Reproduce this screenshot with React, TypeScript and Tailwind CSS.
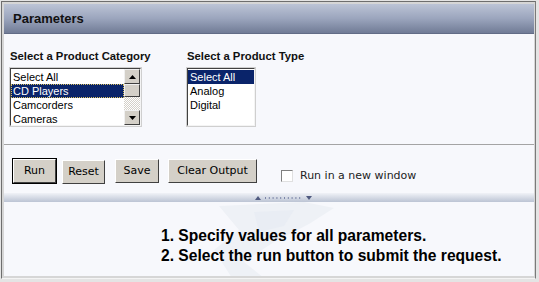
import type { ReactNode } from 'react';

const tahoma = { fontFamily: '"DejaVu Sans", Verdana, sans-serif' };

function ListBox({ items, selected, focused, width, scroll }: { items: string[]; selected: number; focused?: boolean; width: number; scroll?: boolean }) {
  return (
    <div className="border border-[#cfcfcf] bg-[#cfcfcf]" style={{ width }}>
      <div className="flex h-[58px] border border-t-[#404040] border-l-[#404040] border-r-[#f4f4f4] border-b-[#f4f4f4] bg-white">
        <div className="flex flex-1 flex-col pt-[1px]">
          {items.map((item, i) => (
            <div
              key={item}
              className={
                'h-[14px] pl-[1px] text-[11px] leading-[13px] ' +
                (i === selected
                  ? 'bg-[#0a246a] text-white ' + (focused ? 'border border-dotted border-[#d8c060]' : 'border border-transparent')
                  : 'border border-transparent text-black')
              }
            >
              {item}
            </div>
          ))}
        </div>
        {scroll && <ScrollBar />}
      </div>
    </div>
  );
}

function ArrowBtn({ children }: { children: ReactNode }) {
  return (
    <div className="flex h-[15px] w-[16px] items-center justify-center border border-t-[#f0f0f0] border-l-[#f0f0f0] border-r-[#404040] border-b-[#404040] bg-[#d4d0c8]">
      {children}
    </div>
  );
}

function ScrollBar() {
  return (
    <div className="flex w-[16px] flex-col">
      <ArrowBtn>
        <svg width="7" height="4" viewBox="0 0 7 4"><path d="M3.5 0 L7 4 L0 4 Z" fill="#000" /></svg>
      </ArrowBtn>
      <div className="h-[13px] w-[16px] border border-t-[#f0f0f0] border-l-[#f0f0f0] border-r-[#404040] border-b-[#404040] bg-[#d4d0c8]" />
      <div className="flex-1 bg-[repeating-conic-gradient(#ffffff_0%_25%,#d4d0c8_0%_50%)] bg-[length:2px_2px]" />
      <ArrowBtn>
        <svg width="7" height="4" viewBox="0 0 7 4"><path d="M0 0 L7 0 L3.5 4 Z" fill="#000" /></svg>
      </ArrowBtn>
    </div>
  );
}

function Btn({ label, width, primary }: { label: string; width: number; primary?: boolean }) {
  return (
    <div className={primary ? 'border border-black' : ''}>
      <div
        className="flex h-[24px] items-center justify-center border border-t-[#ffffff] border-l-[#ffffff] border-r-[#404040] border-b-[#404040] bg-[#d4d0c8] text-[11px] text-black"
        style={{ width: primary ? width - 2 : width, ...tahoma }}
      >
        {label}
      </div>
    </div>
  );
}

export default function App() {
  const arial = { fontFamily: '"Liberation Sans", Arial, sans-serif' };
  return (
    <div className="h-[282px] w-[539px] bg-[#e4e4e4] pt-[1px] pr-[3px] pb-[3px] pl-[1px]">
      <div className="flex h-full flex-col border border-t-[#6e6e6e] border-l-[#6e6e6e] border-r-[#7a7a7a] border-b-[#f4f4f4] bg-[#d6d6d6] p-[2px] pr-[1px]">
        <div className="flex flex-1 flex-col bg-[#f7f8fc]" style={arial}>
          <div className="flex h-[30px] items-center border-b border-[#626c86] bg-gradient-to-b from-[#bcc4d6] via-[#9ba5bd] to-[#717c96] pl-[9px] pt-[1px] text-[13px] font-bold text-[#111]">
            Parameters
          </div>

          <div className="flex pl-[5px] pt-[16px]">
            <div className="flex w-[177px] flex-col">
              <div className="mb-[4px] pl-[1px] text-[11.3px] leading-[13px] font-bold text-[#111]">Select a Product Category</div>
              <ListBox items={['Select All', 'CD Players', 'Camcorders', 'Cameras']} selected={1} focused width={133} scroll />
            </div>
            <div className="flex flex-col">
              <div className="mb-[4px] pl-[1px] text-[11.3px] leading-[13px] font-bold text-[#111]">Select a Product Type</div>
              <ListBox items={['Select All', 'Analog', 'Digital']} selected={0} width={70} />
            </div>
          </div>

          <div className="mt-[17px] h-[1px] bg-[#a4a4a4]" />

          <div className="flex items-end pl-[8px] pt-[13px]">
            <div className="flex items-end gap-[5px]">
              <Btn label="Run" width={45} primary />
              <Btn label="Reset" width={43} />
            </div>
            <div className="ml-[10px] mb-[1px] flex gap-[9px]">
              <Btn label="Save" width={44} />
              <Btn label="Clear Output" width={89} />
            </div>
            <div className="ml-[24px] flex items-center gap-[7px]" style={tahoma}>
              <div className="h-[12px] w-[12px] border border-t-[#808080] border-l-[#808080] border-r-[#e0e0e0] border-b-[#e0e0e0] bg-white" />
              <span className="text-[11px] text-[#222]">Run in a new window</span>
            </div>
          </div>

          <div className="mt-[9px] flex h-[9px] items-center justify-center bg-gradient-to-b from-[#f0f2f7] to-[#bcc4d4] pl-[30px]">
            <svg width="58" height="6" viewBox="0 0 58 6">
              <path d="M0 5 L3 1 L6 5 Z" fill="#505a80" />
              {Array.from({ length: 10 }).map((_, i) => (
                <rect key={i} x={10 + i * 3.8} y={2} width={1} height={2} fill="#7c86a8" />
              ))}
              <path d="M51 1 L57 1 L54 5 Z" fill="#505a80" />
            </svg>
          </div>

          <div className="relative flex-1 overflow-hidden">
            <svg className="absolute left-0 top-0" width="528" height="76" viewBox="0 0 528 76">
              <path d="M215 4 L300 0 L330 6 L305 22 L270 40 L240 60 L260 76 L228 76 L210 48 L235 28 Z" fill="#eef1f6" />
              <path d="M250 10 L290 8 L280 24 L255 30 Z" fill="#e9edf4" />
            </svg>
            <div className="relative pl-[157px] pt-[24px] text-[15.6px] leading-[20px] font-bold text-black">
              <div>1. Specify values for all parameters.</div>
              <div>2. Select the run button to submit the request.</div>
            </div>
          </div>
        </div>
      </div>
    </div>
  );
}
